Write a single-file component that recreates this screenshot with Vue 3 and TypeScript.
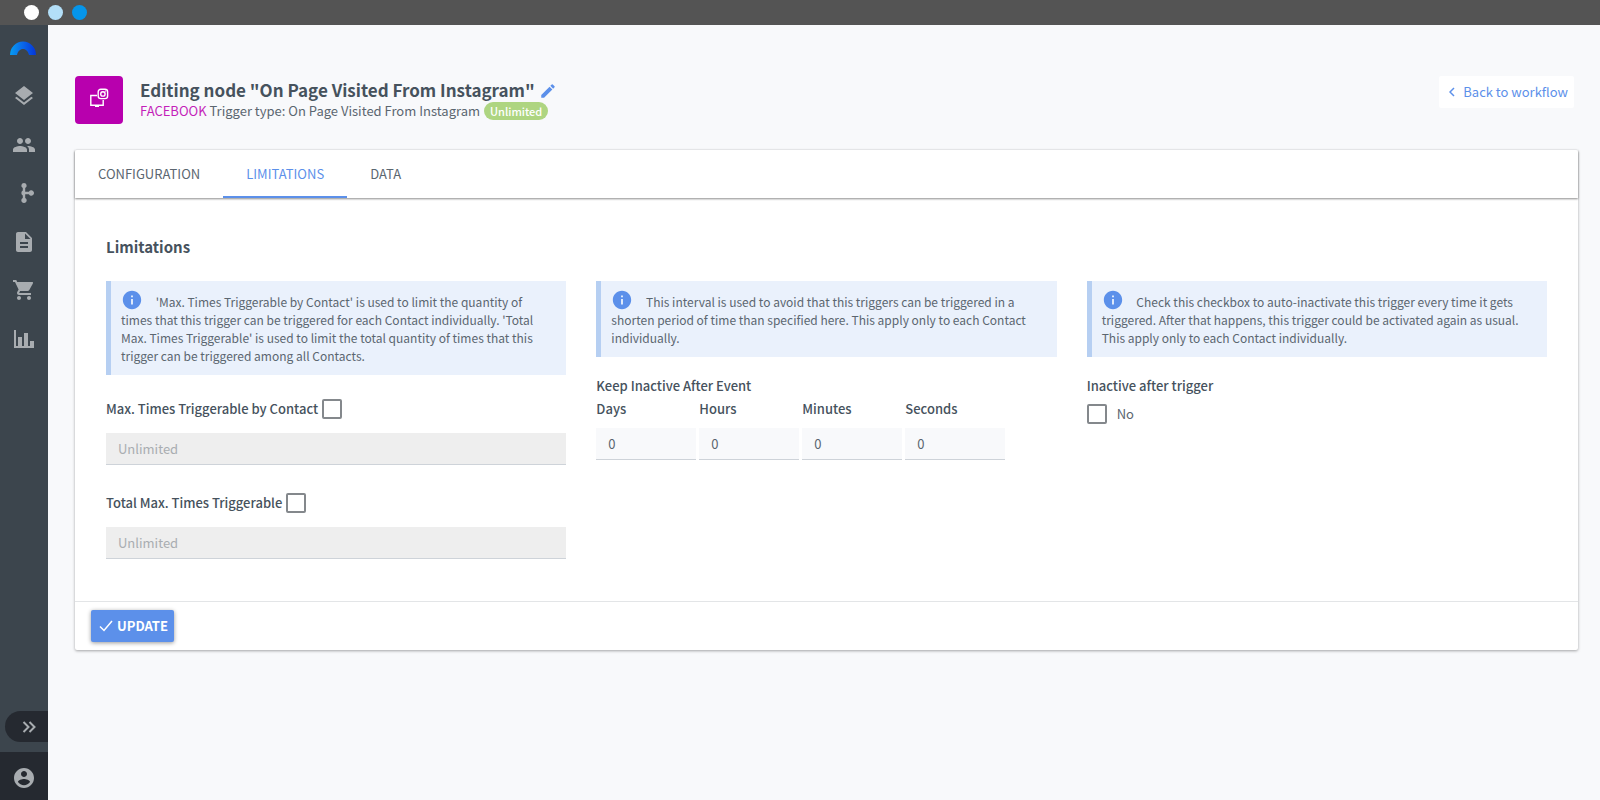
<script setup lang="ts">
import { ref } from 'vue'

interface NavItem {
  label: string
  path: string
}

const nav: NavItem[] = [
  { label: 'Layers', path: 'M11.99 18.54l-7.37-5.73L3 14.07l9 7 9-7-1.63-1.27-7.38 5.74zM12 16l7.36-5.73L21 9l-9-7-9 7 1.63 1.27L12 16z' },
  { label: 'Contacts', path: 'M16 11c1.66 0 2.99-1.34 2.99-3S17.66 5 16 5c-1.66 0-3 1.34-3 3s1.34 3 3 3zm-8 0c1.66 0 2.99-1.34 2.99-3S9.66 5 8 5C6.34 5 5 6.34 5 8s1.34 3 3 3zm0 2c-2.33 0-7 1.17-7 3.5V19h14v-2.5c0-2.33-4.67-3.5-7-3.5zm8 0c-.29 0-.62.02-.97.05 1.16.84 1.97 1.97 1.97 3.45V19h6v-2.5c0-2.33-4.67-3.5-7-3.5z' },
  { label: 'Workflows', path: 'M12 2a2.700 2.700 0 0 1 1.200 5.100v3.700h3.700a2.700 2.700 0 1 1 0 2.400h-3.700v3.700a2.700 2.700 0 1 1-2.400 0v-2.500a2.700 2.700 0 0 1 0-4.800V7.100A2.700 2.700 0 0 1 12 2z' },
  { label: 'Documents', path: 'M14 2H6c-1.1 0-1.99.9-1.99 2L4 20c0 1.1.89 2 1.99 2H18c1.1 0 2-.9 2-2V8l-6-6zm2 16H8v-2h8v2zm0-4H8v-2h8v2zm-3-5V3.500L18.500 9H13z' },
  { label: 'Shop', path: 'M7 18c-1.100 0-1.990.9-1.990 2S5.900 22 7 22s2-.9 2-2-.9-2-2-2zM1 2v2h2l3.600 7.590-1.350 2.450c-.16.28-.25.61-.25.96 0 1.100.9 2 2 2h12v-2H7.420c-.14 0-.25-.11-.25-.25l.03-.12.9-1.630h7.450c.75 0 1.410-.41 1.750-1.030l3.580-6.490A1 1 0 0 0 20 4H5.210l-.94-2H1zm16 16c-1.100 0-1.990.9-1.990 2s.89 2 1.990 2 2-.9 2-2-.9-2-2-2z' },
  { label: 'Reports', path: 'M2 3h2v16h2v-9h4v9h2V6h4v13h2v-5h4v7H2z' },
]

const tabs = ['CONFIGURATION', 'LIMITATIONS', 'DATA']
const activeTab = ref('LIMITATIONS')

const limits = ref([
  { id: 'per-contact', label: 'Max. Times Triggerable by Contact', enabled: false },
  { id: 'total', label: 'Total Max. Times Triggerable', enabled: false },
])

const interval = ref([
  { unit: 'Days', value: '0' },
  { unit: 'Hours', value: '0' },
  { unit: 'Minutes', value: '0' },
  { unit: 'Seconds', value: '0' },
])

const inactiveAfter = ref(false)

const infoPath =
  'M12 2C6.480 2 2 6.480 2 12s4.480 10 10 10 10-4.480 10-10S17.520 2 12 2zm1 15h-2v-6h2v6zm0-8h-2V7h2v2z'
</script>

<template>
  <div class="shell">
    <div class="topbar">
      <span class="dot dot-white"></span>
      <span class="dot dot-pale"></span>
      <span class="dot dot-blue"></span>
    </div>
    <div class="workspace">
      <aside class="sidebar">
        <a class="logo" href="#" aria-label="Home">
          <svg width="26" height="14" viewBox="0 0 26 14">
            <defs>
              <linearGradient id="arc" x1="0" x2="1">
                <stop offset="0" stop-color="#069cf0" />
                <stop offset="0.5" stop-color="#0a66e8" />
                <stop offset="1" stop-color="#0536d8" />
              </linearGradient>
            </defs>
            <path fill="url(#arc)" d="M0 14A13 13.500 0 0 1 26 14h-7c-.8-3.500-3-6-6-6s-5.200 2.500-6 6z" />
          </svg>
        </a>
        <nav class="nav">
          <a v-for="item in nav" :key="item.label" class="nav-link" href="#" :aria-label="item.label">
            <svg class="nav-icon" viewBox="0 0 24 24">
              <path :d="item.path" />
            </svg>
          </a>
        </nav>
        <button class="expand" type="button" aria-label="Expand menu">
          <svg width="14" height="12" viewBox="0 0 14 12">
            <path d="M1.500 1l5 5-5 5M7.500 1l5 5-5 5" fill="none" stroke="#a8acb0" stroke-width="2" />
          </svg>
        </button>
        <a class="account" href="#" aria-label="Account">
          <svg class="nav-icon" viewBox="0 0 24 24">
            <path d="M12 2C6.480 2 2 6.480 2 12s4.480 10 10 10 10-4.480 10-10S17.520 2 12 2zm0 3c1.660 0 3 1.340 3 3s-1.340 3-3 3-3-1.340-3-3 1.340-3 3-3zm0 14.200c-2.500 0-4.710-1.280-6-3.220.03-1.990 4-3.080 6-3.080 1.990 0 5.970 1.090 6 3.080-1.290 1.940-3.500 3.220-6 3.220z" />
          </svg>
        </a>
      </aside>

      <main class="main">
        <header class="header">
          <div class="node-icon">
            <svg width="20" height="20" viewBox="0 0 20 20" fill="none" stroke="#fff">
              <path d="M8 7.500H1.800v9.700h12.400V12" stroke-width="1.400" />
              <path d="M6 18.200h4" stroke-width="1.600" />
              <rect x="9.200" y="1.200" width="9.400" height="9.400" rx="2.600" stroke-width="1.400" />
              <circle cx="13.900" cy="5.900" r="2.200" stroke-width="1.400" />
              <circle cx="16.600" cy="3.200" r="0.500" stroke-width="0.600" />
            </svg>
          </div>
          <div class="titles">
            <div class="title-row">
              <h1 class="title">Editing node "On Page Visited From Instagram"</h1>
              <button class="edit" type="button" aria-label="Edit name">
                <svg width="18" height="18" viewBox="0 0 24 24">
                  <path fill="#5c90ea" d="M3 17.250V21h3.750L17.810 9.940l-3.750-3.750L3 17.250zM20.710 7.040a1 1 0 0 0 0-1.410l-2.340-2.340a1 1 0 0 0-1.410 0l-1.830 1.830 3.750 3.750 1.830-1.830z" />
                </svg>
              </button>
            </div>
            <div class="subtitle-row">
              <p class="subtitle"><span class="brand">FACEBOOK</span> Trigger type: On Page Visited From Instagram</p>
              <span class="badge">Unlimited</span>
            </div>
          </div>
          <a class="back" href="#">
            <svg width="6" height="10" viewBox="0 0 6 10">
              <path d="M5 1L1 5l4 4" fill="none" stroke="#5c90ea" stroke-width="1.500" />
            </svg>
            Back to workflow
          </a>
        </header>

        <section class="card">
          <div class="tabs" role="tablist">
            <button
              v-for="tab in tabs"
              :key="tab"
              class="tab"
              :class="{ active: tab === activeTab }"
              type="button"
              role="tab"
              :aria-selected="tab === activeTab"
              @click="activeTab = tab"
            >
              {{ tab }}
            </button>
          </div>

          <div class="body">
            <h2 class="section-title">Limitations</h2>
            <div class="columns">
              <div class="column">
                <p class="info">
                  <svg class="info-icon" viewBox="0 0 24 24"><path :d="infoPath" /></svg>
                  'Max. Times Triggerable by Contact' is used to limit the quantity of times that this trigger can be
                  triggered for each Contact individually. 'Total Max. Times Triggerable' is used to limit the total
                  quantity of times that this trigger can be triggered among all Contacts.
                </p>
                <div v-for="limit in limits" :key="limit.id" class="limit">
                  <div class="limit-head">
                    <label class="label" :for="limit.id">{{ limit.label }}</label>
                    <input :id="limit.id" v-model="limit.enabled" class="check" type="checkbox" />
                  </div>
                  <input
                    class="field field-wide"
                    type="text"
                    placeholder="Unlimited"
                    :aria-label="limit.label"
                    :disabled="!limit.enabled"
                  />
                </div>
              </div>

              <div class="column">
                <p class="info">
                  <svg class="info-icon" viewBox="0 0 24 24"><path :d="infoPath" /></svg>
                  This interval is used to avoid that this triggers can be triggered in a shorten period of time than
                  specified here. This apply only to each Contact individually.
                </p>
                <h3 class="label group-label">Keep Inactive After Event</h3>
                <div class="interval">
                  <div v-for="part in interval" :key="part.unit" class="part">
                    <label class="label" :for="part.unit">{{ part.unit }}</label>
                    <input :id="part.unit" v-model="part.value" class="field" type="text" />
                  </div>
                </div>
              </div>

              <div class="column">
                <p class="info">
                  <svg class="info-icon" viewBox="0 0 24 24"><path :d="infoPath" /></svg>
                  Check this checkbox to auto-inactivate this trigger every time it gets triggered. After that happens,
                  this trigger could be activated again as usual. This apply only to each Contact individually.
                </p>
                <h3 class="label group-label">Inactive after trigger</h3>
                <label class="toggle">
                  <input v-model="inactiveAfter" class="check" type="checkbox" />
                  <span>{{ inactiveAfter ? 'Yes' : 'No' }}</span>
                </label>
              </div>
            </div>
          </div>

          <footer class="footer">
            <button class="update" type="button">
              <svg width="14" height="12" viewBox="0 0 14 12">
                <path d="M1 6.500l4 4L13 1" fill="none" stroke="#fff" stroke-width="1.500" />
              </svg>
              UPDATE
            </button>
          </footer>
        </section>
      </main>
    </div>
  </div>
</template>

<style>
body {
  margin: 0;
  background: #f8f9fb;
}
</style>

<style scoped>
.shell,
.shell * {
  box-sizing: border-box;
}

.shell {
  display: flex;
  flex-direction: column;
  min-height: 100vh;
  color: #5b6670;
  font: 13px/18px 'Noto Sans CJK SC', 'Noto Sans', sans-serif;
}

button,
input {
  font: inherit;
}

button {
  border: 0;
  padding: 0;
  background: none;
  cursor: pointer;
}

h1,
h2,
h3,
p {
  margin: 0;
}

a {
  text-decoration: none;
}

.topbar {
  display: flex;
  align-items: center;
  gap: 9px;
  height: 25px;
  padding-left: 24px;
  background: #545454;
}

.dot {
  width: 15px;
  height: 15px;
  border-radius: 50%;
}

.dot-white {
  background: #fff;
}

.dot-pale {
  background: #b3dff8;
}

.dot-blue {
  background: #0595ea;
}

.workspace {
  display: flex;
  flex: 1;
}

.sidebar {
  display: flex;
  flex-direction: column;
  width: 48px;
  background: #3c454d;
}

.logo {
  display: flex;
  justify-content: center;
  height: 47px;
  padding: 16px 2px 0 0;
}

.nav {
  display: flex;
  flex-direction: column;
  height: 291px;
}

.nav-link {
  display: flex;
  flex: 1;
  align-items: center;
  justify-content: center;
}

.nav-icon {
  width: 24px;
  height: 24px;
  fill: #a8acb0;
}

.expand {
  display: flex;
  align-items: center;
  justify-content: center;
  height: 31px;
  margin: auto 0 10px 5px;
  padding-left: 5px;
  border-radius: 16px 0 0 16px;
  background: #252930;
}

.account {
  display: flex;
  align-items: center;
  justify-content: center;
  height: 48px;
  padding-top: 3px;
  background: #252930;
}

.main {
  flex: 1;
  padding: 51px 22px 0 27px;
}

.header {
  display: flex;
  align-items: flex-start;
}

.node-icon {
  display: flex;
  align-items: center;
  justify-content: center;
  width: 48px;
  height: 48px;
  padding-bottom: 4px;
  border-radius: 4px;
  background: #b800ae;
}

.titles {
  flex: 1;
  margin-left: 17px;
}

.title-row {
  display: flex;
  align-items: center;
  gap: 4px;
  height: 26px;
  padding-top: 2px;
}

.title {
  color: #46525d;
  font-size: 17px;
  font-weight: 700;
  line-height: 22px;
}

.edit {
  display: flex;
  margin-top: 2px;
}

.subtitle-row {
  display: flex;
  align-items: center;
  gap: 4px;
}

.brand {
  color: #c41fb9;
}

.badge {
  padding: 0 6px;
  border-radius: 9px;
  background: #aed581;
  color: #fff;
  font-size: 11px;
  font-weight: 500;
}

.back {
  display: flex;
  align-items: center;
  gap: 8px;
  height: 32px;
  margin-right: 4px;
  padding: 0 6px 0 10px;
  border-radius: 2px;
  background: #fff;
  color: #5c90ea;
}

.card {
  margin-top: 26px;
  border-radius: 2px;
  background: #fff;
  box-shadow: 0 1px 3px rgba(0, 0, 0, 0.35);
}

.tabs {
  display: flex;
  height: 48px;
  box-shadow: 0 1px 2px rgba(0, 0, 0, 0.45);
}

.tab {
  padding: 2px 23px 0;
  border-bottom: 2px solid transparent;
  color: #5b6670;
}

.tab.active {
  border-color: #5c90ea;
  color: #5c90ea;
}

.body {
  padding: 38px 31px 42px;
}

.section-title {
  color: #46525d;
  font-size: 15px;
  font-weight: 700;
  line-height: 22px;
}

.columns {
  display: grid;
  grid-template-columns: repeat(3, 1fr);
  gap: 30px;
  margin-top: 23px;
}

.info {
  padding: 8px 15px 10px 10px;
  border-left: 5px solid #b6cff2;
  background: #eaf1fc;
  font-size: 12px;
}

.info-icon {
  width: 22px;
  height: 22px;
  margin-right: 10px;
  fill: #5c90ea;
  vertical-align: -4px;
}

.label {
  color: #46525d;
  font-size: 13px;
  font-weight: 500;
  line-height: 18px;
}

.limit {
  margin-top: 24px;
}

.limit + .limit {
  margin-top: 28px;
}

.limit-head {
  display: flex;
  align-items: center;
  gap: 4px;
}

.check {
  width: 20px;
  height: 20px;
  margin: 0;
  border: 2px solid #84888c;
  border-radius: 2px;
  background: #fff;
  appearance: none;
}

.check:checked {
  border-color: #5c90ea;
  background: #5c90ea;
}

.field {
  width: 100px;
  height: 32px;
  padding: 0 12px;
  border: 0;
  border-bottom: 1px solid #ced3d9;
  border-radius: 0;
  background: #f8f9fb;
  color: #5b6670;
}

.field-wide {
  display: block;
  width: 100%;
  margin-top: 14px;
}

.field:disabled {
  background: #eee;
}

.field::placeholder {
  color: #a9adb1;
}

.group-label {
  margin-top: 20px;
}

.interval {
  display: flex;
  gap: 3px;
  margin-top: 5px;
}

.part {
  display: flex;
  flex-direction: column;
  gap: 10px;
}

.toggle {
  display: flex;
  align-items: center;
  gap: 10px;
  width: fit-content;
  margin-top: 9px;
}

.footer {
  padding: 8px 16px;
  border-top: 1px solid #e3e5e7;
}

.update {
  display: flex;
  align-items: center;
  gap: 4px;
  height: 32px;
  padding: 0 6px 0 8px;
  border-radius: 2px;
  background: #5c90ea;
  box-shadow: 0 1px 4px rgba(0, 0, 0, 0.4);
  color: #fff;
  font-weight: 700;
}
</style>
